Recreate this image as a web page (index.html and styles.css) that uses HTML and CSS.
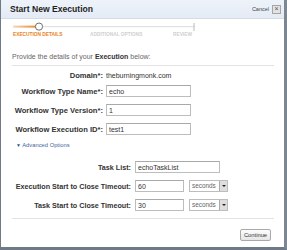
FILE: index.html
```html
<!DOCTYPE html>
<html>
<head>
    <meta charset="utf-8">
    <title>Start New Execution</title>
    <link rel="stylesheet" href="styles.css">
</head>
<body>
    <div class="dialog">
        <div class="header">
            <span class="title">Start New Execution</span>
            <span class="cancel">Cancel <span class="close">&times;</span></span>
        </div>

        <div class="steps">
            <svg class="track" width="184" height="10" viewBox="0 0 184 10">
                <defs>
                    <linearGradient id="done" x1="0" x2="1" y1="0" y2="0">
                        <stop offset="0" stop-color="#f6d9b8"/>
                        <stop offset="1" stop-color="#e98b2c"/>
                    </linearGradient>
                </defs>
                <rect x="0" y="4" width="182" height="1.2" fill="#e2e2e2"/>
                <rect x="0" y="3.6" width="23" height="2" fill="url(#done)"/>
                <rect x="180.5" y="1" width="1" height="8" fill="#bbb"/>
                <circle cx="26" cy="4.6" r="3.6" fill="#fff" stroke="#707070" stroke-width="1"/>
            </svg>
            <div class="step-labels">
                <span class="step current">EXECUTION DETAILS</span>
                <span class="step">ADDITIONAL OPTIONS</span>
                <span class="step">REVIEW</span>
            </div>
        </div>

        <p class="intro">Provide the details of your <b>Execution</b> below:</p>
        <div class="rule"></div>

        <div class="form">
            <div class="row domain">
                <label>Domain*:</label>
                <span class="value">theburningmonk.com</span>
            </div>
            <div class="row">
                <label>Workflow Type Name*:</label>
                <input class="text" value="echo">
            </div>
            <div class="row">
                <label>Workflow Type Version*:</label>
                <input class="text" value="1">
            </div>
            <div class="row">
                <label>Workflow Execution ID*:</label>
                <input class="text" value="test1">
            </div>
        </div>

        <div class="advanced"><span class="arrow">&#9660;</span> Advanced Options</div>

        <div class="form wide">
            <div class="row">
                <label>Task List:</label>
                <input class="text" value="echoTaskList">
            </div>
            <div class="row">
                <label>Execution Start to Close Timeout:</label>
                <input class="text short" value="60">
                <span class="select">seconds<span class="drop"></span></span>
            </div>
            <div class="row">
                <label>Task Start to Close Timeout:</label>
                <input class="text short" value="30">
                <span class="select">seconds<span class="drop"></span></span>
            </div>
        </div>

        <div class="rule bottom"></div>

        <div class="actions">
            <button class="button">Continue</button>
        </div>
    </div>
</body>
</html>
```

FILE: styles.css
```css
body {
    margin: 0;
    background-color: #fff;
    font-family: "Liberation Sans", Arial, sans-serif;
    color: #333;
}

.dialog {
    width: 283px;
    height: 247px;
    border-left: 1px solid #6f7a86;
    border-right: 3px solid #7d8792;
    border-bottom: 3px solid #6f7a86;
    background-color: #fff;
    overflow: hidden;
}

.header {
    height: 18px;
    border-bottom: 1px solid #d3dde8;
    background: linear-gradient(#eef3fa, #e3ebf5);
    display: flex;
    align-items: center;
    justify-content: space-between;
    padding: 0 3px 0 9px;
}

.title {
    font-size: 8.6px;
    font-weight: bold;
    color: #1e1e1e;
}

.cancel {
    font-size: 5.5px;
    color: #444;
    display: flex;
    align-items: center;
    gap: 3px;
}

.close {
    width: 7px;
    height: 7px;
    border: 1px solid #a5a5a5;
    background-color: #e2e2e2;
    color: #555;
    font-size: 7px;
    line-height: 6px;
    text-align: center;
}

.steps {
    padding: 3px 0 0 12px;
}

.track {
    display: block;
}

.step-labels {
    display: flex;
    height: 6px;
    line-height: 6px;
    margin-top: 0;
}

.step {
    font-size: 4.8px;
    font-weight: bold;
    color: #cfcfcf;
}

.step:nth-child(1) {
    width: 77px;
}

.step:nth-child(2) {
    width: 83px;
}

.step.current {
    color: #e8821e;
}

.intro {
    margin: 14px 0 0 11px;
    font-size: 7px;
    line-height: 10px;
    color: #666;
}

.intro b {
    color: #333;
}

.rule {
    margin: 3px 10px 0 11px;
    border-top: 1px solid #e3e3e3;
}

.rule.bottom {
    margin-top: 6px;
}

.form {
    margin-top: 4px;
}

.row {
    display: flex;
    align-items: center;
    height: 12px;
    margin-bottom: 7px;
}

.row.domain {
    height: 10px;
    margin-bottom: 5px;
}

.row label {
    width: 102px;
    padding-right: 3px;
    text-align: right;
    font-size: 7.6px;
    font-weight: bold;
    color: #333;
    white-space: nowrap;
}

.wide .row label {
    width: 130px;
    padding-right: 4px;
    font-size: 7.2px;
}

.value {
    font-size: 7px;
    color: #333;
}

.text {
    box-sizing: border-box;
    width: 85px;
    height: 12px;
    margin: 0;
    padding: 0 2px;
    border: 1px solid #bdbdbd;
    border-top-color: #a9a9a9;
    font-family: "Liberation Sans", Arial, sans-serif;
    font-size: 7px;
    color: #333;
    background-color: #fff;
}

.text.short {
    width: 49px;
}

.select {
    box-sizing: border-box;
    width: 39px;
    height: 12px;
    margin-left: 5px;
    padding-left: 2px;
    border: 1px solid #bdbdbd;
    font-size: 6.4px;
    line-height: 10px;
    color: #666;
    display: flex;
    justify-content: space-between;
}

.drop {
    width: 7px;
    height: 10px;
    border-left: 1px solid #aaa;
    background-color: #dedede;
    position: relative;
}

.drop::after {
    content: "";
    position: absolute;
    left: 1.5px;
    top: 4px;
    border-left: 2px solid transparent;
    border-right: 2px solid transparent;
    border-top: 2.5px solid #222;
}

.form.wide {
    margin-top: 12px;
}

.advanced {
    margin: -1px 0 0 15px;
    height: 8px;
    line-height: 8px;
    font-size: 5.8px;
    color: #3f64a0;
}

.arrow {
    font-size: 5px;
    color: #2f5696;
}

.actions {
    display: flex;
    justify-content: flex-end;
    padding: 10px 13px 0 0;
}

.button {
    width: 31px;
    height: 12px;
    padding: 0;
    border: 1px solid #a9a9a9;
    border-radius: 2px;
    background: linear-gradient(#fdfdfd, #e6e6e6);
    font-family: "Liberation Sans", Arial, sans-serif;
    font-size: 5.8px;
    color: #333;
}
```
